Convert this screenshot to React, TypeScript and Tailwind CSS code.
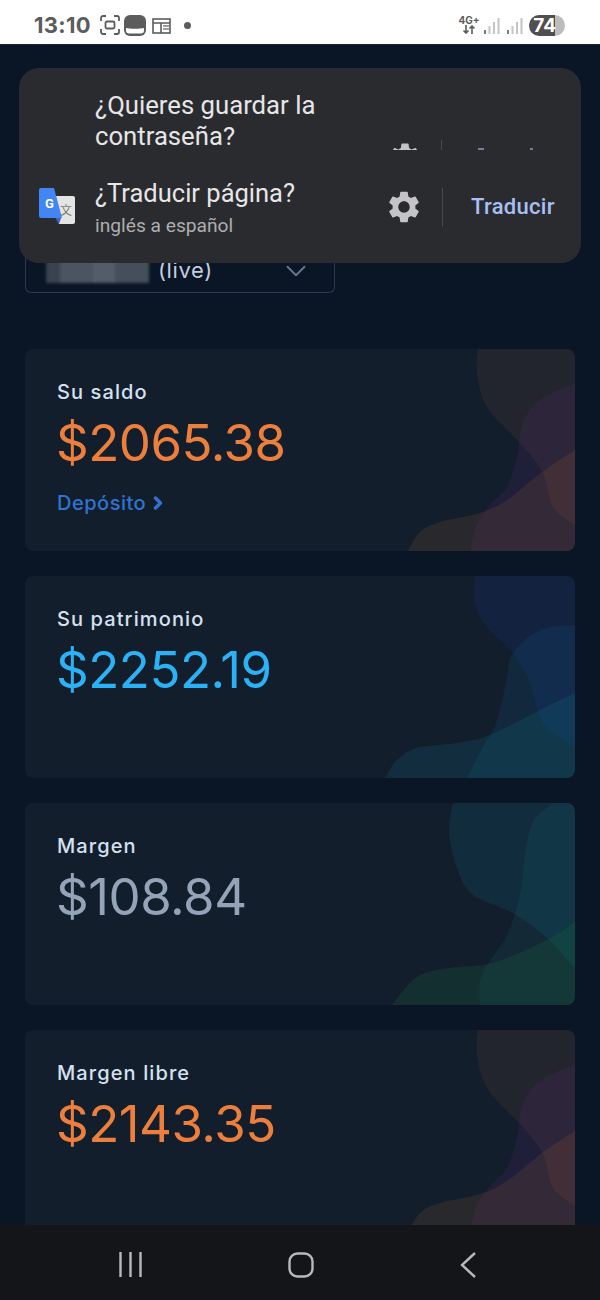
import React from 'react';
import { ChevronDown, ChevronRight } from 'lucide-react';
import { MdSettings } from 'react-icons/md';

type Pt = [number, number];
type Blob = { points: Pt[]; close: Pt[]; fill: string };

// Catmull-Rom through the traced points, so the waves stay smooth
const wave = (points: Pt[], close: Pt[]) => {
  let d = `M${points[0][0]} ${points[0][1]}`;
  for (let i = 0; i < points.length - 1; i++) {
    const p0 = points[Math.max(i - 1, 0)];
    const p1 = points[i];
    const p2 = points[i + 1];
    const p3 = points[Math.min(i + 2, points.length - 1)];
    const c1 = [p1[0] + (p2[0] - p0[0]) / 6, p1[1] + (p2[1] - p0[1]) / 6];
    const c2 = [p2[0] - (p3[0] - p1[0]) / 6, p2[1] - (p3[1] - p1[1]) / 6];
    d += ` C${c1[0]} ${c1[1]} ${c2[0]} ${c2[1]} ${p2[0]} ${p2[1]}`;
  }
  return d + close.map((c) => ` L${c[0]} ${c[1]}`).join('') + ' Z';
};

const TR: Pt = [550, 0];
const BR: Pt = [550, 202];

const warm: Blob[] = [
  { points: [[453, 0], [452, 24], [462, 58], [495, 94], [518, 124], [528, 158], [550, 176]], close: [TR], fill: 'rgba(240,128,64,0.075)' },
  { points: [[550, 34], [515, 51], [498, 74], [492, 108], [482, 138], [465, 156], [452, 175], [445, 202]], close: [BR], fill: 'rgba(160,40,190,0.09)' },
  { points: [[550, 101], [517, 123], [482, 151], [455, 164], [415, 173], [395, 183], [383, 202]], close: [BR], fill: 'rgba(230,130,40,0.11)' },
];

const blue: Blob[] = [
  { points: [[450, 0], [450, 27], [462, 51], [488, 77], [505, 107], [513, 136], [522, 151], [550, 171]], close: [TR], fill: 'rgba(20,60,150,0.18)' },
  { points: [[550, 49], [515, 54], [488, 77], [482, 101], [475, 134], [468, 154], [458, 171], [442, 202]], close: [BR], fill: 'rgba(10,90,140,0.18)' },
  { points: [[550, 117], [515, 134], [465, 159], [432, 167], [392, 172], [372, 184], [360, 202]], close: [BR], fill: 'rgba(15,130,150,0.17)' },
];

const teal: Blob[] = [
  { points: [[428, 0], [424, 29], [432, 65], [448, 92], [488, 110], [522, 135], [550, 165]], close: [TR], fill: 'rgba(10,110,140,0.18)' },
  { points: [[528, 0], [508, 19], [500, 52], [495, 92], [482, 132], [462, 162], [455, 179], [455, 202]], close: [BR, TR], fill: 'rgba(20,150,150,0.09)' },
  { points: [[550, 119], [522, 137], [482, 155], [458, 162], [425, 165], [392, 174], [367, 202]], close: [BR], fill: 'rgba(30,130,60,0.18)' },
];

const cards = [
  { label: 'Su saldo', value: '$2065.38', color: 'text-[#ed7f3d]', blobs: warm, deposit: true },
  { label: 'Su patrimonio', value: '$2252.19', color: 'text-[#2bb2f6]', blobs: blue },
  { label: 'Margen', value: '$108.84', color: 'text-[#94a3b8]', blobs: teal },
  { label: 'Margen libre', value: '$2143.35', color: 'text-[#ed7f3d]', blobs: warm },
];

function BalanceCard({ card }: { card: (typeof cards)[number] }) {
  return (
    <div className="relative h-[202px] shrink-0 overflow-hidden rounded-lg bg-[#131e2d] pt-[28px] pl-8">
      <svg className="absolute inset-0" width="550" height="202" viewBox="0 0 550 202">
        {card.blobs.map((b, i) => (
          <path key={i} d={wave(b.points, b.close)} fill={b.fill} />
        ))}
      </svg>
      <div className="relative">
        <p className="text-[20px] leading-[30px] font-medium tracking-[1.1px] text-[#d6e1f0]">{card.label}</p>
        <p className={`mt-[6px] ml-[-1px] text-[51px] leading-[60px] tracking-[-0.5px] ${card.color}`}>{card.value}</p>
        {card.deposit && (
          <div className="mt-[15px] flex items-center gap-[2px] text-[20px] leading-[30px] font-medium tracking-[0.5px] text-[#2f74d0]">
            Depósito <ChevronRight className="h-[20px] w-[20px]" strokeWidth={4} />
          </div>
        )}
      </div>
    </div>
  );
}

function StatusBar() {
  return (
    <div className="flex h-11 shrink-0 items-center bg-white pt-[6px] pr-[35px] pl-[34px] text-[#5c5c5c]">
      <span className="w-[66px] text-[22px] leading-none font-bold tracking-[0.3px]">13:10</span>
      {/* screenshot */}
      <svg width="20" height="20" viewBox="0 0 20 20" fill="none" stroke="currentColor" strokeWidth="1.8">
        <path d="M1 6V3a2 2 0 0 1 2-2h3M14 1h3a2 2 0 0 1 2 2v3M19 14v3a2 2 0 0 1-2 2h-3M6 19H3a2 2 0 0 1-2-2v-3" />
        <rect x="5.5" y="6.5" width="9" height="7" rx="1.5" />
      </svg>
      {/* app icon */}
      <svg className="ml-1" width="22" height="21" viewBox="0 0 22 21">
        <rect width="22" height="21" rx="6" fill="currentColor" />
        <path d="M2 13c3 1 15 1 18 0v2.5a3 3 0 0 1-3 3H5a3 3 0 0 1-3-3z" fill="#fff" />
      </svg>
      {/* news */}
      <svg className="ml-[6px]" width="19" height="17" viewBox="0 0 19 17" fill="none" stroke="currentColor" strokeWidth="1.6">
        <rect x="1" y="2" width="17" height="14" />
        <path d="M1 6h17M9 6v10" />
        <path d="M11 9h6M11 12h6" strokeWidth="2" opacity="0.6" />
      </svg>
      <span className="ml-[13px] h-[7px] w-[7px] rounded-full bg-[#5c5c5c]" />
      <div className="ml-auto flex items-center">
        <div className="flex w-[22px] flex-col items-center text-[10px] leading-[9px] font-bold">
          <span>4G+</span>
          <svg width="14" height="9" viewBox="0 0 14 9" fill="none" stroke="currentColor" strokeWidth="1.6">
            <path d="M4 0v8M1.5 5.5 4 8l2.5-2.5M10 9V1M7.5 3.5 10 1l2.5 2.5" />
          </svg>
        </div>
        {[0, 1].map((n) => (
          <svg key={n} className={n ? 'ml-[7px]' : 'ml-[4px]'} width="16" height="17" viewBox="0 0 16 17" fill="#c4c4c4">
            <rect x="0" y="13" width="2" height="4" fill="#7d7d7d" />
            <rect x="4.5" y="9" width="2" height="8" />
            <rect x="9" y="5" width="2" height="12" />
            <rect x="13.5" y="1" width="2" height="16" />
          </svg>
        ))}
        <div className="ml-[6px] flex h-[21px] w-[36px] items-center overflow-hidden rounded-full bg-[#bcbcbc]">
          <div className="flex h-full w-[26px] items-center justify-end bg-[#4f4f4f]">
            <span className="mr-[-1px] text-[19px] leading-none font-bold text-white">74</span>
          </div>
        </div>
      </div>
    </div>
  );
}

function TranslateLogo() {
  return (
    <svg width="36" height="38" viewBox="0 0 36 38">
      <path d="M17 8h17a2 2 0 0 1 2 2v24a2 2 0 0 1-2 2H20z" fill="#e4e4e4" />
      <path d="M20 36h-0.5l-3-6H22z" fill="#3a5fc4" />
      <path d="M2 0h13l8 30H2a2 2 0 0 1-2-2V2a2 2 0 0 1 2-2z" fill="#4285f4" />
      <text x="6" y="20" fontFamily="Roboto, sans-serif" fontWeight="700" fontSize="13" fill="#fff">G</text>
      <text x="21" y="27" fontFamily="'Noto Sans CJK SC', sans-serif" fontSize="12" fill="#7a7a7a">文</text>
    </svg>
  );
}

function TranslateToast() {
  return (
    <div className="absolute top-[68px] left-[19px] h-[195px] w-[562px] overflow-hidden rounded-[20px] bg-[#2a2b2e] font-['Roboto',sans-serif]">
      {/* password prompt peeking out behind the translate one */}
      <div className="flex h-[82px] overflow-hidden">
        <p className="mt-[22px] ml-[76px] w-[270px] text-[25.7px] leading-[31px] text-[#e6e6e8]">¿Quieres guardar la contraseña?</p>
        <div className="ml-[22px] flex h-[120px] items-start pt-[72px]">
          <MdSettings className="h-[36px] w-[36px] text-[#c4c4c6]" />
          <span className="ml-[18px] h-[40px] w-px bg-[#4a4b4e]" />
          {/* only the tips of the button label show above the fold */}
          <span className="mt-[8px] ml-[36px] h-[2px] w-[6px] bg-[#6f7da0]" />
          <span className="mt-[8px] ml-[46px] h-[2px] w-[3px] bg-[#6f7da0]" />
        </div>
      </div>
      <div className="flex h-[113px] items-center">
        <div className="ml-[20px] w-[56px]">
          <TranslateLogo />
        </div>
        <div className="mt-[2px] w-[290px]">
          <p className="text-[25.5px] leading-[32px] text-[#e6e6e8]">¿Traducir página?</p>
          <p className="mt-[4px] text-[19.2px] leading-[26px] text-[#aeaeb0]">inglés a español</p>
        </div>
        <MdSettings className="h-[38px] w-[38px] text-[#c4c4c6]" />
        <span className="ml-[19px] h-[38px] w-px bg-[#4a4b4e]" />
        <span className="ml-[28px] text-[22px] font-medium tracking-[0.3px] text-[#a8c0f5]">Traducir</span>
      </div>
    </div>
  );
}

function NavBar() {
  return (
    <div className="flex h-[75px] shrink-0 items-start justify-between bg-[#141518] pt-[27px] pr-[124px] pl-[119px]">
      <svg width="23" height="25" viewBox="0 0 23 25" fill="none" stroke="#b9b9bb" strokeWidth="2.4">
        <path d="M1.5 0v25M11.5 0v25M21.5 0v25" />
      </svg>
      <svg width="26" height="26" viewBox="0 0 26 26" fill="none" stroke="#b9b9bb" strokeWidth="2.4">
        <rect x="1.5" y="1.5" width="23" height="23" rx="8" />
      </svg>
      <svg width="16" height="26" viewBox="0 0 16 26" fill="none" stroke="#b9b9bb" strokeWidth="2.4">
        <path d="M15 1 2 13l13 12" />
      </svg>
    </div>
  );
}

export default function App() {
  return (
    <div className="relative flex h-[1300px] w-[600px] flex-col overflow-hidden bg-[#0a1525] font-['Inter',sans-serif]">
      <StatusBar />
      <main className="flex flex-1 flex-col gap-[25px] overflow-hidden border-t border-[#1a2433] px-[25px] pt-[204px]">
        {/* account selector, mostly under the toast */}
        <div className="mb-[31px] flex h-[44px] w-[310px] shrink-0 items-center rounded-b-md border border-t-0 border-[#2c3a4d] pr-[21px] pl-[20px]">
          <div className="flex h-[24px] w-[103px] items-stretch blur-[1.5px]">
            <span className="w-[14px] bg-[#39434f]" />
            <span className="w-[33px] bg-[#4a5561]" />
            <span className="w-[22px] bg-[#525d69]" />
            <span className="w-[34px] bg-[#454f5b]" />
          </div>
          <span className="ml-[9px] text-[22px] tracking-[0.6px] text-[#c5cede]">(live)</span>
          <ChevronDown className="ml-auto h-[34px] w-[34px] text-[#6b7788]" strokeWidth={1.3} />
        </div>
        {cards.map((card) => (
          <BalanceCard key={card.label} card={card} />
        ))}
      </main>
      <NavBar />
      <TranslateToast />
    </div>
  );
}
